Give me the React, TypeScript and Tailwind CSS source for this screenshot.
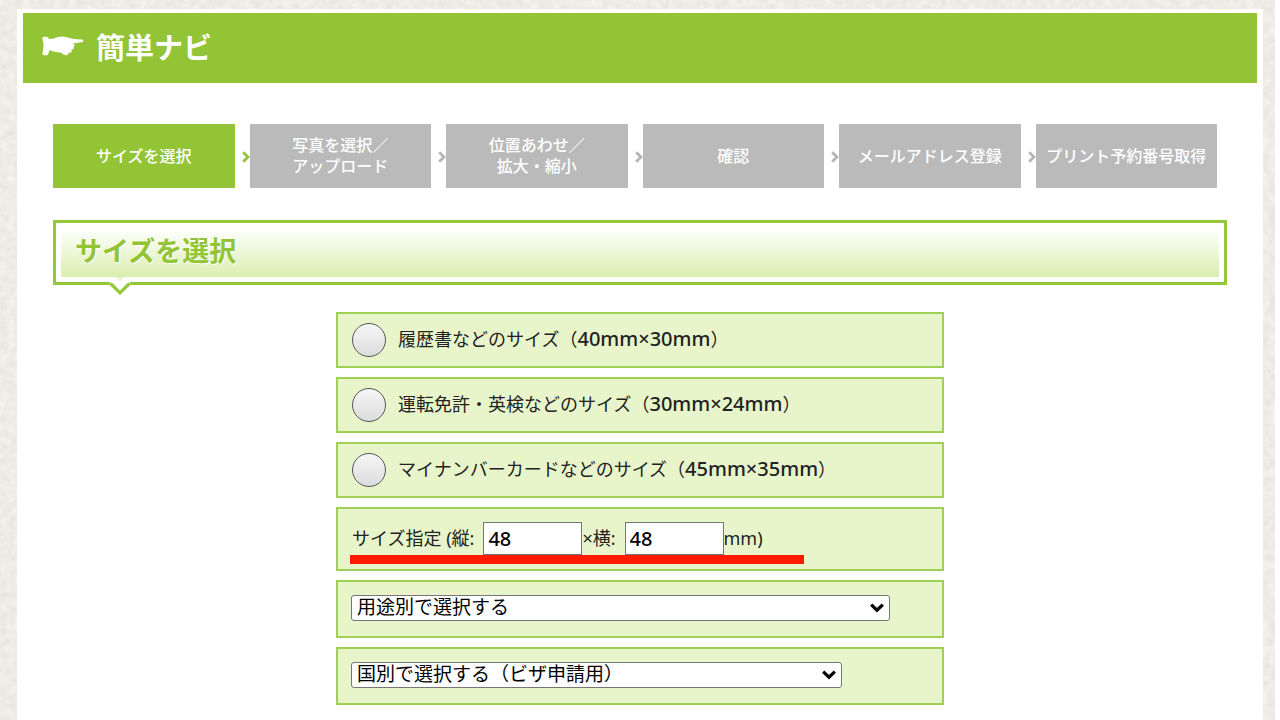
import { useState, type ReactNode } from "react";

const steps: { text: string; active?: boolean }[] = [
  { text: "サイズを選択", active: true },
  { text: "写真を選択／\nアップロード" },
  { text: "位置あわせ／\n拡大・縮小" },
  { text: "確認" },
  { text: "メールアドレス登録" },
  { text: "プリント予約番号取得" },
];

const sizes = [
  { id: "resume", name: "履歴書などのサイズ", dims: "40mm×30mm" },
  { id: "license", name: "運転免許・英検などのサイズ", dims: "30mm×24mm" },
  { id: "mynumber", name: "マイナンバーカードなどのサイズ", dims: "45mm×35mm" },
];

function PaperTexture() {
  return (
    <svg className="absolute inset-0 h-full w-full" aria-hidden="true">
      <filter id="paper" x="0" y="0" width="100%" height="100%" colorInterpolationFilters="sRGB">
        <feTurbulence type="fractalNoise" baseFrequency="0.13" numOctaves={3} seed={4} />
        <feColorMatrix values="0.09 0 0 0 0.89  0.09 0 0 0 0.878  0.09 0 0 0 0.864  0 0 0 0 1" />
      </filter>
      <rect width="100%" height="100%" filter="url(#paper)" />
    </svg>
  );
}

function PointingHand() {
  return (
    <svg width="42" height="20" viewBox="0 0 42 20" fill="white" aria-hidden="true">
      <path d="M.8 1C2.500 .5 5 .5 6.300 1.200L6.800 3C10 3.200 13 2.200 16 1C19 .2 22 .2 24.500 1.200C28 2.500 33 3.200 39.500 3.500C42 3.900 42 5.900 39.500 6.200L30.500 7.400C33 8.200 33.500 9.500 31.500 11C32.500 12.800 31 13.800 29.300 13.800C30.500 16 29 17 26.800 16.600C26.500 19.200 24 19.800 22 18.800C20.500 18.300 20 17 18.500 16.600C14.500 16.200 10.500 15.500 8 14C7 15.300 6.500 17.500 5.600 19C4 19.500 2.200 19.400 .8 18.700C.3 17.500 .5 16.500 .8 15.500C1.800 11.500 1.800 8 .7 4C.4 2.800 .3 1.700 .8 1Z" />
    </svg>
  );
}

function StepArrow({ active }: { active?: boolean }) {
  return (
    <span className={active ? "flex w-[15px] shrink-0 items-center justify-end pt-[2px] text-[#92c436]" : "flex w-[15px] shrink-0 items-center justify-end pt-[2px] text-[#b5b5b5]"}>
      <svg width="8" height="12" viewBox="0 0 8 12" fill="none" stroke="currentColor" strokeWidth="2.8" aria-hidden="true">
        <path d="M1.200 1.200L6 6L1.200 10.800" />
      </svg>
    </span>
  );
}

function Row({ children, className }: { children: ReactNode; className: string }) {
  return <div className={`border-2 border-[#a0d056] bg-[#e8f5ca] ${className}`}>{children}</div>;
}

function Dropdown({ label, className }: { label: string; className: string }) {
  return (
    <div className={`relative ${className}`}>
      <select
        aria-label={label}
        className="block h-[26px] w-full appearance-none rounded-[3px] border border-[#767676] bg-white pb-[2px] pl-[5px] text-[19px] leading-[22px] text-black"
      >
        <option>{label}</option>
      </select>
      <svg className="pointer-events-none absolute top-[8px] right-[6px]" width="14" height="10" viewBox="0 0 14 10" fill="none" stroke="black" strokeWidth="3.2" aria-hidden="true">
        <path d="M1.200 1.600L7 7.200L12.800 1.600" />
      </svg>
    </div>
  );
}

export default function App() {
  const [size, setSize] = useState("");
  return (
    <div className="relative min-h-screen bg-white pr-[5px] font-['Noto_Sans','Noto_Sans_CJK_JP',sans-serif] text-[#222]">
      <div className="relative min-h-screen pt-[9px] pr-3 pl-[17px]">
        <PaperTexture />
        <main className="relative min-h-[calc(100vh-9px)] bg-white px-[6px] pt-1">
          <header className="flex h-[70px] items-center gap-3 bg-[#92c436] pb-1 pl-[19px]">
            <PointingHand />
            <h1 className="font-['Noto_Sans_CJK_JP',sans-serif] text-[29px] leading-[40px] font-bold text-white">簡単ナビ</h1>
          </header>

          <div className="px-[30px] pt-[41px] pb-4">
            <ol className="flex pr-[10px] font-['Noto_Sans_CJK_JP',sans-serif]">
              {steps.map((s, i) => (
                <li key={s.text} className={i ? "flex min-w-0 flex-1 basis-[15px]" : "flex min-w-0 flex-1"}>
                  {i > 0 && <StepArrow active={steps[i - 1].active} />}
                  <span
                    className={
                      s.active
                        ? "flex h-16 flex-1 items-center justify-center bg-[#92c436] pb-[2px] text-center text-[16px] leading-[21px] font-medium whitespace-pre text-white"
                        : "flex h-16 flex-1 items-center justify-center bg-[#bababa] pb-[2px] text-center text-[16px] leading-[21px] font-medium whitespace-pre text-white"
                    }
                  >
                    {s.text}
                  </span>
                </li>
              ))}
            </ol>

            <div className="relative mt-8 border-[3px] border-[#92c83a] bg-white p-[5px]">
              <h2 className="bg-linear-to-b from-white to-[#dbeeaf] pb-[5px] pl-[14px] font-['Noto_Sans_CJK_JP',sans-serif] text-[27px] leading-[44px] font-bold text-[#92c436] [text-shadow:1px_1px_1px_white]">
                サイズを選択
              </h2>
              <svg className="absolute top-full left-[53px] -mt-[5px]" width="22" height="18" viewBox="0 0 22 18" aria-hidden="true">
                <path d="M1 0H21V7L11 16L1 7Z" fill="white" />
                <path d="M6 0H16L11 5Z" fill="#edf7d7" />
                <path d="M1.500 6.500L11 15.800L20.500 6.500" fill="none" stroke="#92c83a" strokeWidth="3.200" />
              </svg>
            </div>

            <form className="mx-auto mt-[27px] flex w-full max-w-[608px] flex-col gap-[9px]">
              {sizes.map((s) => (
                <Row key={s.id} className="flex h-14 items-center px-[14px]">
                  <input
                    type="radio"
                    id={s.id}
                    name="size"
                    checked={size === s.id}
                    onChange={() => setSize(s.id)}
                    className="size-[34px] shrink-0 appearance-none rounded-full border border-[#555] bg-linear-to-b from-[#f6f6f6] to-[#dcdcdc] checked:border-[#92c436]"
                  />
                  <label htmlFor={s.id} className="pb-[3px] pl-3 text-[18px] leading-[28px] whitespace-nowrap">
                    {s.name}（<span className="text-[20px] font-medium">{s.dims}</span>）
                  </label>
                </Row>
              ))}

              <Row className="relative flex h-16 items-center px-[14px] pb-[2px] text-[18px] leading-[28px] whitespace-nowrap">
                <label htmlFor="height">サイズ指定 (縦:</label>
                <input id="height" defaultValue="48" className="ml-[9px] h-[33px] w-[99px] border border-[#767676] bg-white pl-1 text-[20px] font-medium text-black" />
                <label htmlFor="width">×横:</label>
                <input id="width" defaultValue="48" className="ml-[9px] h-[33px] w-[99px] border border-[#767676] bg-white pl-1 text-[20px] font-medium text-black" />
                <span>mm)</span>
                <span className="absolute top-[46px] left-3 h-[9px] w-[454px] bg-[#ff1a00]" />
              </Row>

              <Row className="h-[58px] px-[13px] pt-[13px]">
                <Dropdown label="用途別で選択する" className="max-w-[539px]" />
              </Row>
              <Row className="h-[58px] px-[13px] pt-[13px]">
                <Dropdown label="国別で選択する（ビザ申請用）" className="max-w-[491px]" />
              </Row>
            </form>
          </div>
        </main>
      </div>
    </div>
  );
}
